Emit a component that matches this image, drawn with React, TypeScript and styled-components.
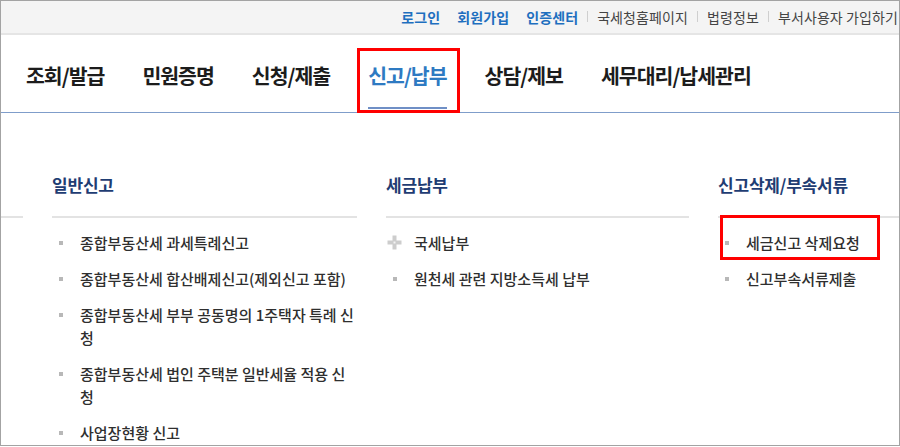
import React from "react";
import styled, { createGlobalStyle, css } from "styled-components";

const GlobalStyle = createGlobalStyle`
  * { box-sizing: border-box; }
  html, body { margin: 0; padding: 0; background: #ffffff; }
  body { font-family: "Noto Sans CJK KR", "Noto Sans", sans-serif; }
  ul { margin: 0; padding: 0; list-style: none; }
`;

const Frame = styled.div`
  width: 900px;
  height: 446px;
  border: 1px solid #a3a3a3;
  background: #ffffff;
  overflow: hidden;
`;

const TopBar = styled.div`
  display: flex;
  justify-content: flex-end;
  align-items: center;
  height: 34px;
  padding: 0 1px 1px 0;
  background: #f4f4f4;
  border-bottom: 2px solid #e5e5e5;
  white-space: nowrap;
  font-size: 14px;
  line-height: 18px;
`;

const TopLink = styled.a<{ $strong?: boolean }>`
  color: #444444;
  text-decoration: none;
  letter-spacing: 0.1px;
  ${(p) =>
    p.$strong &&
    css`
      color: #1e6fbf;
      font-weight: 700;
      margin-left: 17px;
    `}
`;

const Sep = styled.span`
  display: inline-block;
  width: 1px;
  height: 11px;
  margin: 0 9px;
  background: #cfcfcf;
`;

const Nav = styled.nav`
  display: flex;
  gap: 14px;
  height: 78px;
  padding: 13px 0 0 13px;
  border-bottom: 1px solid #7f9dca;
`;

const NavItem = styled.a<{ $active?: boolean; $marked?: boolean }>`
  position: relative;
  height: 64px;
  padding: 13px 12px 0;
  font-size: 20.5px;
  line-height: 28px;
  font-weight: 700;
  letter-spacing: -1px;
  color: #1c1c1c;
  text-decoration: none;
  white-space: nowrap;

  ${(p) =>
    p.$active &&
    css`
      color: #2e7ac2;
      &::before {
        content: "";
        position: absolute;
        left: 12px;
        right: 12px;
        bottom: 3px;
        height: 2px;
        background: #6f8fc6;
      }
    `}

  ${(p) =>
    p.$marked &&
    css`
      &::after {
        content: "";
        position: absolute;
        top: 0;
        left: 1px;
        right: -1px;
        bottom: -1px;
        border: 3px solid #ff0000;
      }
    `}
`;

const Sections = styled.div`
  display: grid;
  grid-template-columns: 22px 305px 303px 1fr;
  column-gap: 29px;
`;

const Column = styled.section``;

const Heading = styled.h3`
  margin: 0;
  height: 105px;
  padding: 60px 0 19px;
  border-bottom: 2px solid #e3e3e3;
  font-size: 17px;
  line-height: 24px;
  font-weight: 700;
  letter-spacing: -0.2px;
  color: #1f3d73;
  white-space: nowrap;
`;

const List = styled.ul`
  padding-top: 13px;
`;

const Item = styled.li<{ $marked?: boolean }>`
  position: relative;
  width: fit-content;
  max-width: 100%;
  margin-bottom: 13px;
  padding-left: 28px;
  padding-right: 2px;
  font-size: 15px;
  line-height: 23px;
  font-weight: 500;
  color: #2f2f2f;

  ${(p) =>
    p.$marked &&
    css`
      &::after {
        content: "";
        position: absolute;
        top: -16px;
        bottom: -6px;
        left: 2px;
        right: -18px;
        border: 3px solid #ff0000;
      }
    `}
`;

const Square = styled.span`
  position: absolute;
  left: 7px;
  top: 10px;
  width: 4px;
  height: 4px;
  background: #b8b8b8;
`;

const PlusMark = styled.svg`
  position: absolute;
  left: 1px;
  top: 4px;
`;

function Bullet({ kind }: { kind: "square" | "plus" }) {
  if (kind === "plus") {
    return (
      <PlusMark width="15" height="15" viewBox="0 0 15 15">
        <rect x="5.5" y="0.5" width="4" height="14" fill="#cdcdcd" />
        <rect x="0.5" y="5.5" width="14" height="4" fill="#cdcdcd" />
        <rect x="6.5" y="6.5" width="2" height="2" fill="#f3f3f3" />
      </PlusMark>
    );
  }
  return <Square />;
}

type Entry = { label: string; bullet?: "square" | "plus"; marked?: boolean };

const topLinks = ["로그인", "회원가입", "인증센터"];
const subLinks = ["국세청홈페이지", "법령정보", "부서사용자 가입하기"];

const menus = ["조회/발급", "민원증명", "신청/제출", "신고/납부", "상담/제보", "세무대리/납세관리"];

const sections: { title: string; items: Entry[] }[] = [
  {
    title: "일반신고",
    items: [
      { label: "종합부동산세 과세특례신고" },
      { label: "종합부동산세 합산배제신고(제외신고 포함)" },
      { label: "종합부동산세 부부 공동명의 1주택자 특례 신청" },
      { label: "종합부동산세 법인 주택분 일반세율 적용 신청" },
      { label: "사업장현황 신고" },
    ],
  },
  {
    title: "세금납부",
    items: [{ label: "국세납부", bullet: "plus" }, { label: "원천세 관련 지방소득세 납부" }],
  },
  {
    title: "신고삭제/부속서류",
    items: [{ label: "세금신고 삭제요청", marked: true }, { label: "신고부속서류제출" }],
  },
];

export default function App() {
  return (
    <>
      <GlobalStyle />
      <Frame>
        <TopBar>
          {topLinks.map((l) => (
            <TopLink key={l} $strong href="#">
              {l}
            </TopLink>
          ))}
          {subLinks.map((l) => (
            <React.Fragment key={l}>
              <Sep />
              <TopLink href="#">{l}</TopLink>
            </React.Fragment>
          ))}
        </TopBar>

        <Nav>
          {menus.map((m) => (
            <NavItem key={m} href="#" $active={m === "신고/납부"} $marked={m === "신고/납부"}>
              {m}
            </NavItem>
          ))}
        </Nav>

        <Sections>
          <Column>
            <Heading />
          </Column>
          {sections.map((s) => (
            <Column key={s.title}>
              <Heading>{s.title}</Heading>
              <List>
                {s.items.map((it) => (
                  <Item key={it.label} $marked={it.marked}>
                    <Bullet kind={it.bullet ?? "square"} />
                    {it.label}
                  </Item>
                ))}
              </List>
            </Column>
          ))}
        </Sections>
      </Frame>
    </>
  );
}
